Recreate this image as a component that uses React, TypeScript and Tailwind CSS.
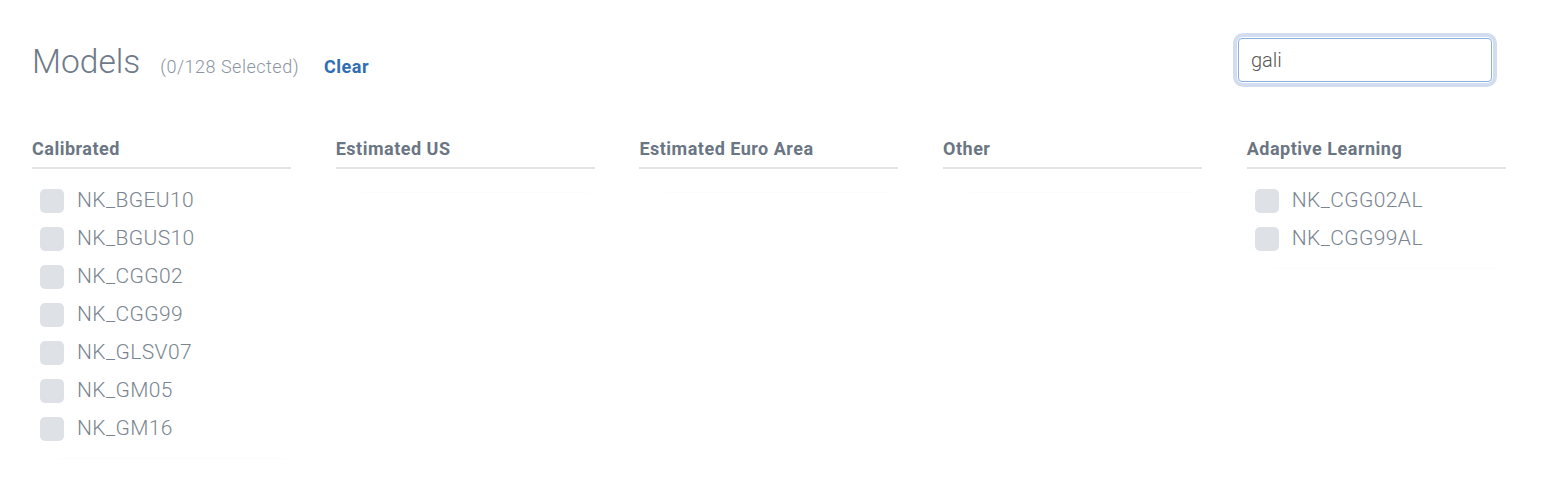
import React from "react";

const columns: { title: string; items: string[] }[] = [
  {
    title: "Calibrated",
    items: ["NK_BGEU10", "NK_BGUS10", "NK_CGG02", "NK_CGG99", "NK_GLSV07", "NK_GM05", "NK_GM16"],
  },
  { title: "Estimated US", items: [] },
  { title: "Estimated Euro Area", items: [] },
  { title: "Other", items: [] },
  { title: "Adaptive Learning", items: ["NK_CGG02AL", "NK_CGG99AL"] },
];

export default function App() {
  return (
    <div
      className="w-[1549px] h-[486px] bg-white overflow-hidden pl-[32px]"
      style={{ fontFamily: "Roboto, 'Open Sans', sans-serif" }}
    >
      <div className="flex items-center justify-between pt-[37px] pr-[56px]">
        <div className="flex items-baseline pt-[4px]">
          <h1 className="text-[33.5px] leading-none font-light text-[#6e7a88]">Models</h1>
          <span className="ml-[20px] text-[18px] tracking-[0.5px] font-light text-[#8b95a1]">(0/128 Selected)</span>
          <button className="ml-[25px] text-[18px] tracking-[0.5px] font-bold text-[#2f6db5]">Clear</button>
        </div>
        <div className="rounded-[6px] p-[1px] shadow-[0_0_0_4px_#d2def0]">
          <input
            defaultValue="gali"
            className="w-[254px] h-[44px] rounded-[4px] border border-[#8aaede] pl-[12px] text-[20px] font-light text-[#555] outline-none caret-[#333]"
            style={{ fontFamily: "Roboto, sans-serif" }}
          />
        </div>
      </div>

      <div className="mt-[55px] grid grid-cols-[repeat(5,259px)] gap-x-[44.7px]">
        {columns.map((col) => (
          <div key={col.title}>
            <div className="h-[31px] pt-[1px] pb-[8px] border-b-2 border-[#e4e4e4] text-[18px] tracking-[0.5px] leading-[20px] font-bold text-[#6b7684]">
              {col.title}
            </div>
            <div className="pt-[13px] pb-[10px] border-b border-[#fcfcfc] ml-[27px] mr-[7px]">
              <ul className="-ml-[27px]">
                {col.items.map((it) => (
                  <li key={it} className="flex items-center h-[38px] pl-[8px]">
                    <span className="w-[24px] h-[24px] rounded-[5px] bg-[#dee1e6]" />
                    <span className="ml-[13px] text-[21px] tracking-[0.4px] font-light text-[#7a8591]">{it}</span>
                  </li>
                ))}
              </ul>
            </div>
          </div>
        ))}
      </div>
    </div>
  );
}
